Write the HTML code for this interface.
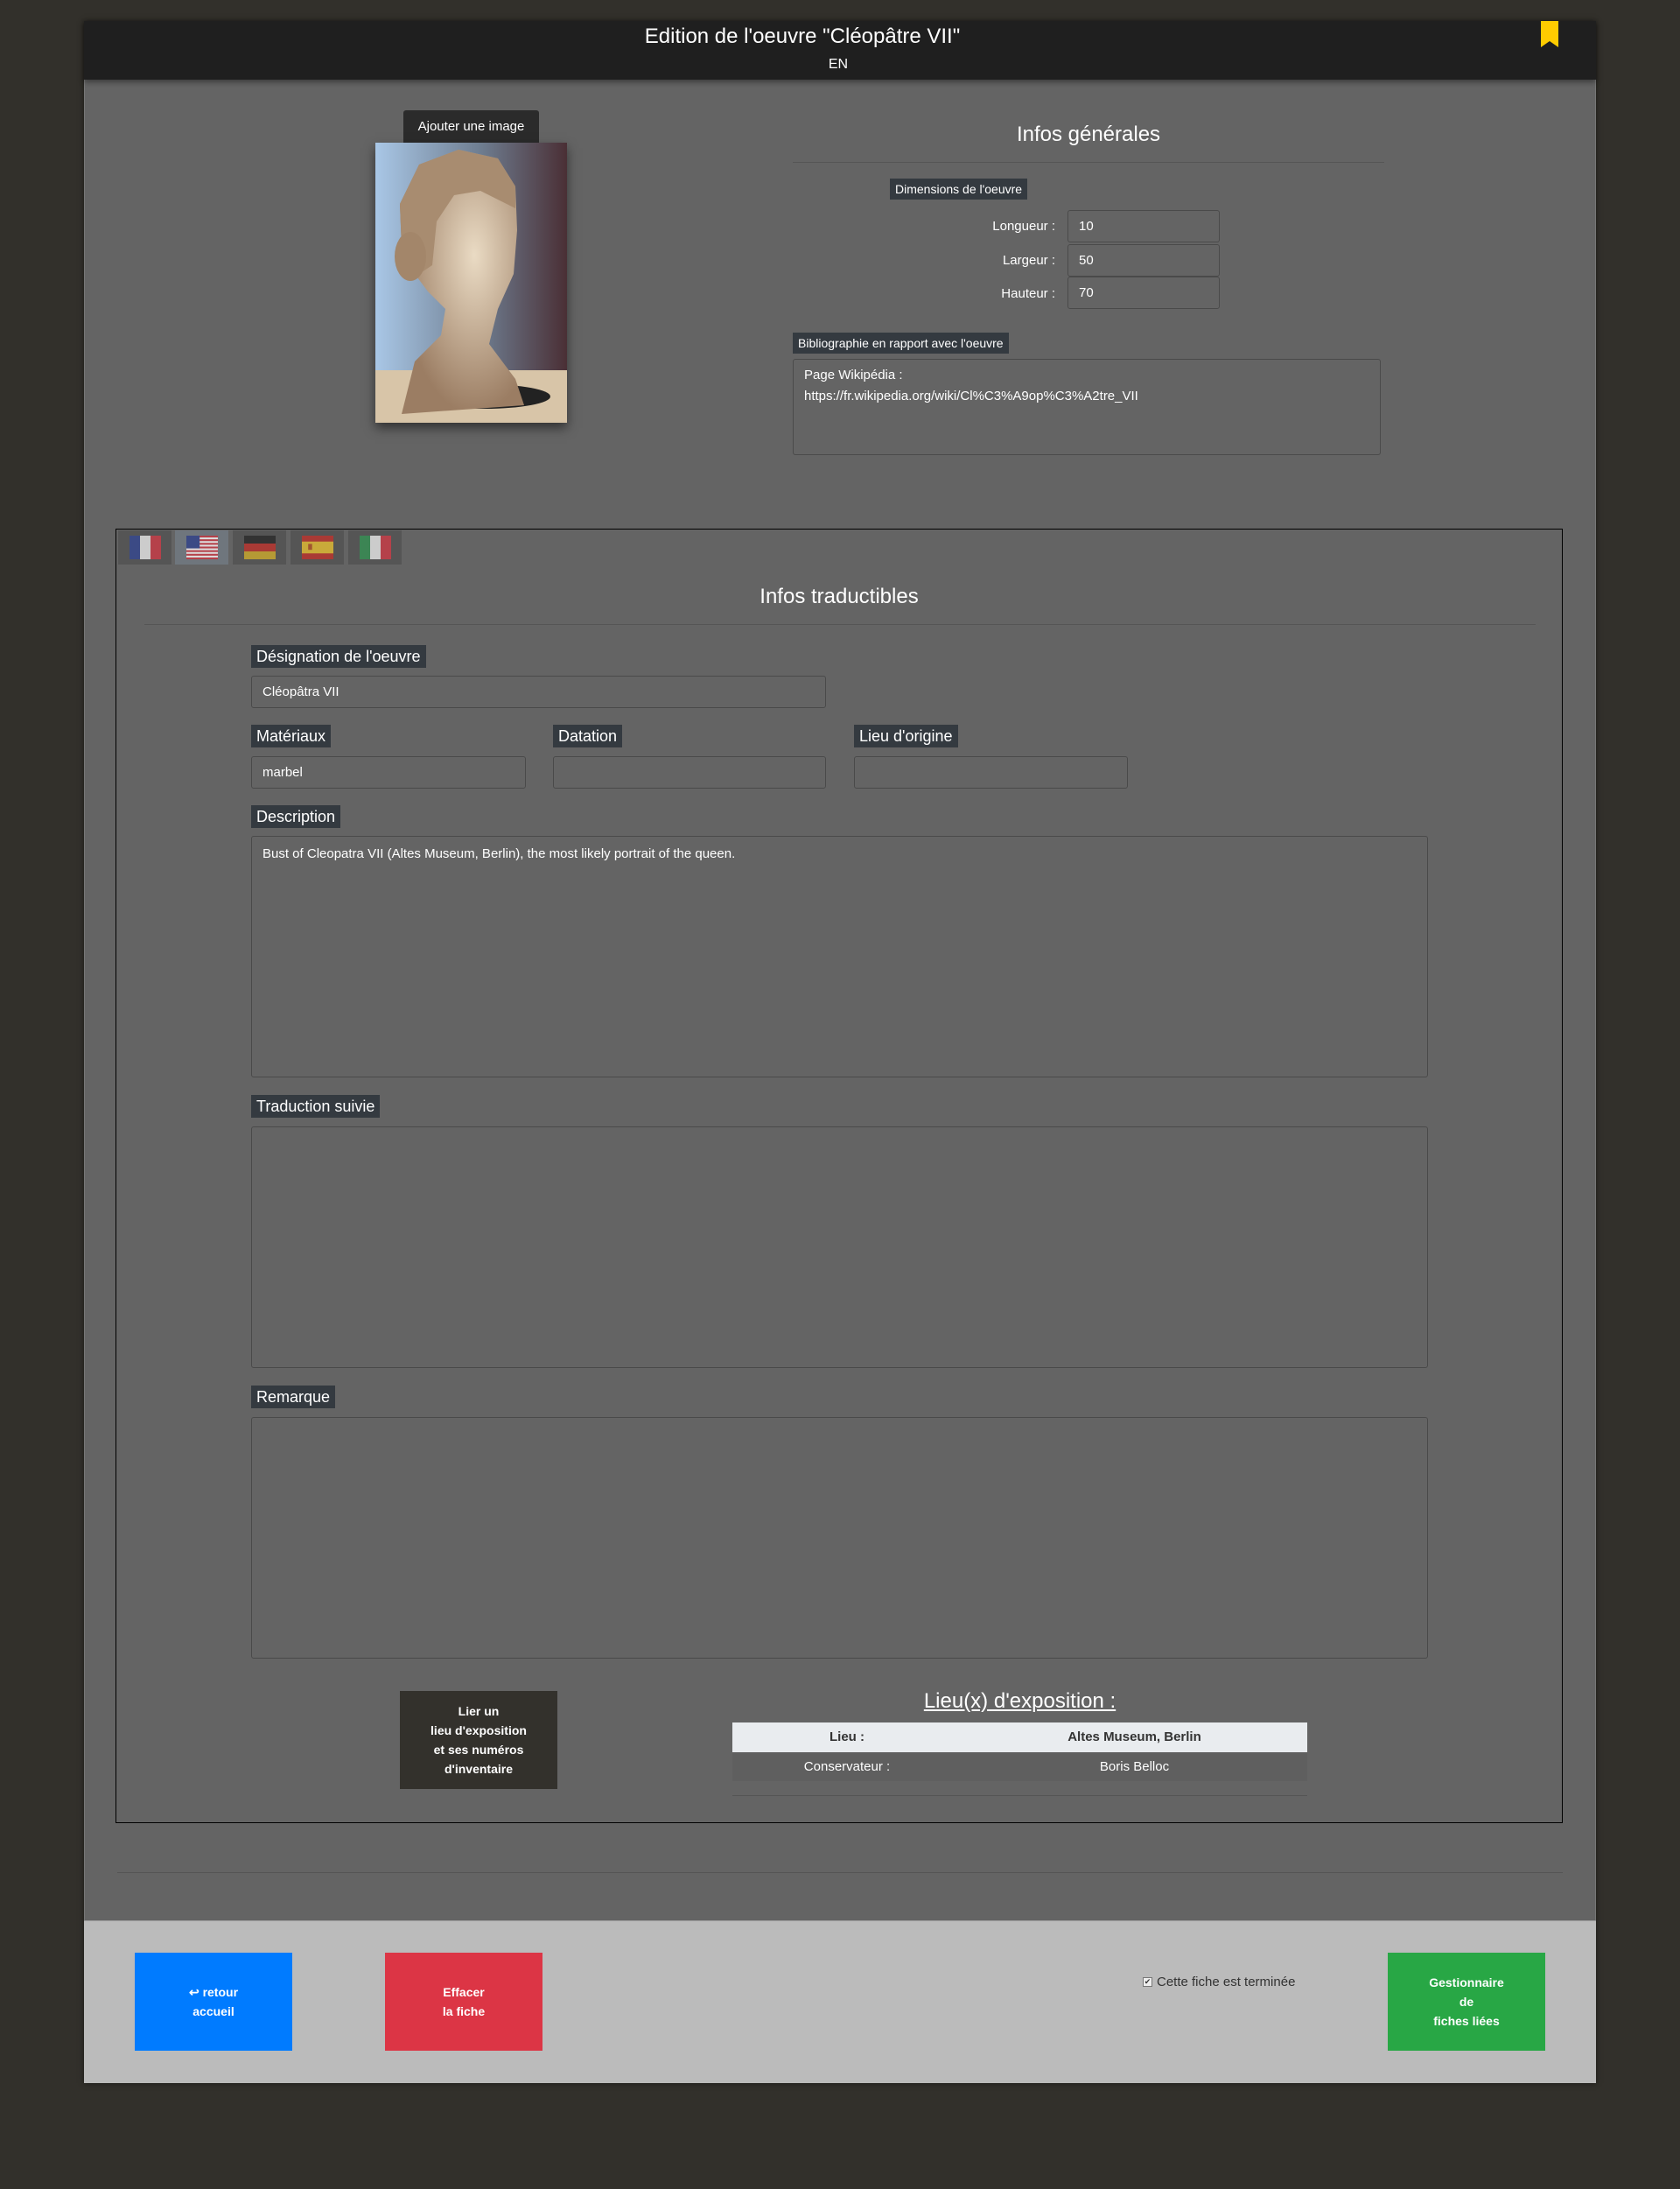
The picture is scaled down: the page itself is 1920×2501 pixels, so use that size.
<!DOCTYPE html>
<html><head><meta charset="utf-8"><style>
*{box-sizing:border-box;margin:0;padding:0}
body{width:1920px;height:2501px;background:#32302b;font-family:"Liberation Sans",sans-serif;color:#fff;position:relative;overflow:hidden}
.a{position:absolute}
.card{left:96px;top:24px;width:1728px;height:2356px;background:#646464;box-shadow:0 0 6px rgba(0,0,0,.5);border:1px solid #777}
.lbl{position:absolute;background:#343a40;color:#fff;font-size:18px;padding:3px 6px;line-height:20px}
.sl{font-size:14px;padding:2px 6px;line-height:20px}
.in{position:absolute;border:1px solid #4a4a4a;border-radius:3px;background:#646464;color:#fff;font-size:15px;padding:0 12px;display:flex;align-items:center}
.ta{align-items:flex-start;padding-top:8px;line-height:24px;display:block}
.btn{position:absolute;color:#fff;font-weight:bold;font-size:14px;display:flex;align-items:center;justify-content:center;text-align:center;line-height:22px}
.tab{position:absolute;top:606px;width:61px;height:39px;background:#555}
.flag{position:absolute;left:13px;top:6px;width:36px;height:27px}
</style></head><body>
<div class="a card"></div>
<div class="a" style="left:96px;top:24px;width:1728px;height:67px;background:#1f1f1f;box-shadow:0 3px 6px rgba(0,0,0,.4)"></div>
<div class="a" style="left:617px;top:27px;width:600px;text-align:center;font-size:24px;line-height:30px">Edition de l'oeuvre "Cléopâtre VII"</div>
<div class="a" style="left:930px;top:65px;width:56px;text-align:center;font-size:16px">EN</div>
<svg class="a" style="left:1761px;top:24px" width="20" height="30" viewBox="0 0 20 30"><path d="M0 0H20V30L10 23L0 30Z" fill="#ffcc00"/></svg>

<div class="btn" style="left:461px;top:126px;width:155px;height:37px;background:#2b2b2b;font-weight:normal;font-size:15px;border-radius:3px 3px 0 0">Ajouter une image</div>
<svg class="a" style="left:429px;top:163px;box-shadow:0 6px 12px rgba(0,0,0,.5)" width="219" height="320" viewBox="0 0 219 320">
<defs><linearGradient id="bg" x1="0" x2="1"><stop offset="0" stop-color="#a9c7e6"/><stop offset=".55" stop-color="#6e7d90"/><stop offset="1" stop-color="#4a2f35"/></linearGradient>
<radialGradient id="fc" cx=".6" cy=".4" r=".6"><stop offset="0" stop-color="#eadbc4"/><stop offset="1" stop-color="#9b7d63"/></radialGradient></defs>
<rect width="219" height="320" fill="url(#bg)"/>
<rect x="0" y="260" width="219" height="60" fill="#d8c5a8"/>
<ellipse cx="125" cy="290" rx="75" ry="14" fill="#222"/>
<path d="M30 310 L45 250 L75 220 L80 190 L60 170 L45 150 L30 120 L28 70 L50 25 L95 8 L140 18 L160 50 L162 100 L158 150 L140 190 L130 230 L160 270 L170 300 Z" fill="url(#fc)"/>
<path d="M28 70 L50 25 L95 8 L140 18 L160 50 L160 75 L120 55 L90 60 L70 90 L65 140 L50 150 L30 120 Z" fill="#a88c70"/>
<ellipse cx="40" cy="130" rx="18" ry="28" fill="#a3866a"/>
</svg>

<div class="a" style="left:906px;top:140px;width:676px;text-align:center;font-size:24px">Infos générales</div>
<div class="a" style="left:906px;top:185px;width:676px;height:1px;background:#555"></div>
<div class="lbl sl" style="left:1017px;top:204px">Dimensions de l'oeuvre</div>
<div class="a" style="left:1100px;top:250px;width:106px;text-align:right;font-size:15px">Longueur :</div>
<div class="a" style="left:1100px;top:289px;width:106px;text-align:right;font-size:15px">Largeur :</div>
<div class="a" style="left:1100px;top:327px;width:106px;text-align:right;font-size:15px">Hauteur :</div>
<div class="in" style="left:1220px;top:240px;width:174px;height:37px">10</div>
<div class="in" style="left:1220px;top:279px;width:174px;height:37px">50</div>
<div class="in" style="left:1220px;top:316px;width:174px;height:37px">70</div>
<div class="lbl sl" style="left:906px;top:380px">Bibliographie en rapport avec l'oeuvre</div>
<div class="in ta" style="left:906px;top:410px;width:672px;height:110px;font-size:15px;padding-top:6px;line-height:24px">Page Wikipédia :<br>https://fr.wikipedia.org/wiki/Cl%C3%A9op%C3%A2tre_VII</div>

<div class="a" style="left:132px;top:604px;width:1654px;height:1479px;border:1px solid #000"></div>
<div class="tab" style="left:135px"><svg class="flag" viewBox="0 0 3 2" preserveAspectRatio="none"><rect width="1" height="2" fill="#3b4a85"/><rect x="1" width="1" height="2" fill="#ccc"/><rect x="2" width="1" height="2" fill="#b5414a"/></svg></div>
<div class="tab" style="left:200px;background:#6f767d"><svg class="flag" viewBox="0 0 19 13" preserveAspectRatio="none"><rect width="19" height="13" fill="#ddd"/><g fill="#b5414a"><rect y="0" width="19" height="1"/><rect y="2" width="19" height="1"/><rect y="4" width="19" height="1"/><rect y="6" width="19" height="1"/><rect y="8" width="19" height="1"/><rect y="10" width="19" height="1"/><rect y="12" width="19" height="1"/></g><rect width="8" height="7" fill="#3b4a85"/></svg></div>
<div class="tab" style="left:266px"><svg class="flag" viewBox="0 0 3 3" preserveAspectRatio="none"><rect width="3" height="1" fill="#333"/><rect y="1" width="3" height="1" fill="#a93a35"/><rect y="2" width="3" height="1" fill="#b59a35"/></svg></div>
<div class="tab" style="left:332px"><svg class="flag" viewBox="0 0 4 4" preserveAspectRatio="none"><rect width="4" height="4" fill="#a93a35"/><rect y="1" width="4" height="2" fill="#c9a93a"/><rect x=".8" y="1.4" width=".5" height="1" fill="#a0552f"/></svg></div>
<div class="tab" style="left:398px"><svg class="flag" viewBox="0 0 3 2" preserveAspectRatio="none"><rect width="1" height="2" fill="#3c8554"/><rect x="1" width="1" height="2" fill="#ccc"/><rect x="2" width="1" height="2" fill="#b5414a"/></svg></div>

<div class="a" style="left:132px;top:668px;width:1654px;text-align:center;font-size:24px">Infos traductibles</div>
<div class="a" style="left:165px;top:713px;width:1590px;height:1px;background:#555"></div>

<div class="lbl" style="left:287px;top:737px">Désignation de l'oeuvre</div>
<div class="in" style="left:287px;top:772px;width:657px;height:37px">Cléopâtra VII</div>
<div class="lbl" style="left:287px;top:828px">Matériaux</div>
<div class="lbl" style="left:632px;top:828px">Datation</div>
<div class="lbl" style="left:976px;top:828px">Lieu d'origine</div>
<div class="in" style="left:287px;top:864px;width:314px;height:37px">marbel</div>
<div class="in" style="left:632px;top:864px;width:312px;height:37px"></div>
<div class="in" style="left:976px;top:864px;width:313px;height:37px"></div>
<div class="lbl" style="left:287px;top:920px">Description</div>
<div class="in ta" style="left:287px;top:955px;width:1345px;height:276px">Bust of Cleopatra VII (Altes Museum, Berlin), the most likely portrait of the queen.</div>
<div class="lbl" style="left:287px;top:1251px">Traduction suivie</div>
<div class="in ta" style="left:287px;top:1287px;width:1345px;height:276px"></div>
<div class="lbl" style="left:287px;top:1583px">Remarque</div>
<div class="in ta" style="left:287px;top:1619px;width:1345px;height:276px"></div>

<div class="btn" style="left:457px;top:1932px;width:180px;height:112px;background:#33312c">Lier un<br>lieu d'exposition<br>et ses numéros<br>d'inventaire</div>
<div class="a" style="left:837px;top:1930px;width:657px;text-align:center;font-size:24px;text-decoration:underline">Lieu(x) d'exposition :</div>
<div class="a" style="left:837px;top:1968px;width:657px;height:34px;background:#e9ecef;color:#333;font-weight:bold;font-size:15px"><span class="a" style="left:0;width:262px;text-align:center;top:8px">Lieu :</span><span class="a" style="left:262px;width:395px;text-align:center;top:8px">Altes Museum, Berlin</span></div>
<div class="a" style="left:837px;top:2002px;width:657px;height:33px;background:#5f5f5f;font-size:15px"><span class="a" style="left:0;width:262px;text-align:center;top:8px">Conservateur :</span><span class="a" style="left:262px;width:395px;text-align:center;top:8px">Boris Belloc</span></div>
<div class="a" style="left:837px;top:2051px;width:657px;height:1px;background:#555"></div>

<div class="a" style="left:134px;top:2139px;width:1652px;height:1px;background:#555"></div>
<div class="a" style="left:96px;top:2194px;width:1728px;height:186px;background:#bbb;border-top:1px solid #999"></div>
<div class="btn" style="left:154px;top:2231px;width:180px;height:112px;background:#007bff">↩ retour<br>accueil</div>
<div class="btn" style="left:440px;top:2231px;width:180px;height:112px;background:#dc3545">Effacer<br>la fiche</div>
<div class="a" style="left:1306px;top:2256px;font-size:15px;color:#333;display:flex;align-items:center"><span style="display:inline-block;width:11px;height:11px;background:#eee;border:1px solid #777;margin-right:5px;font-size:9px;line-height:9px;color:#333;text-align:center">✔</span>Cette fiche est terminée</div>
<div class="btn" style="left:1586px;top:2231px;width:180px;height:112px;background:#28a745">Gestionnaire<br>de<br>fiches liées</div>
</body></html>
